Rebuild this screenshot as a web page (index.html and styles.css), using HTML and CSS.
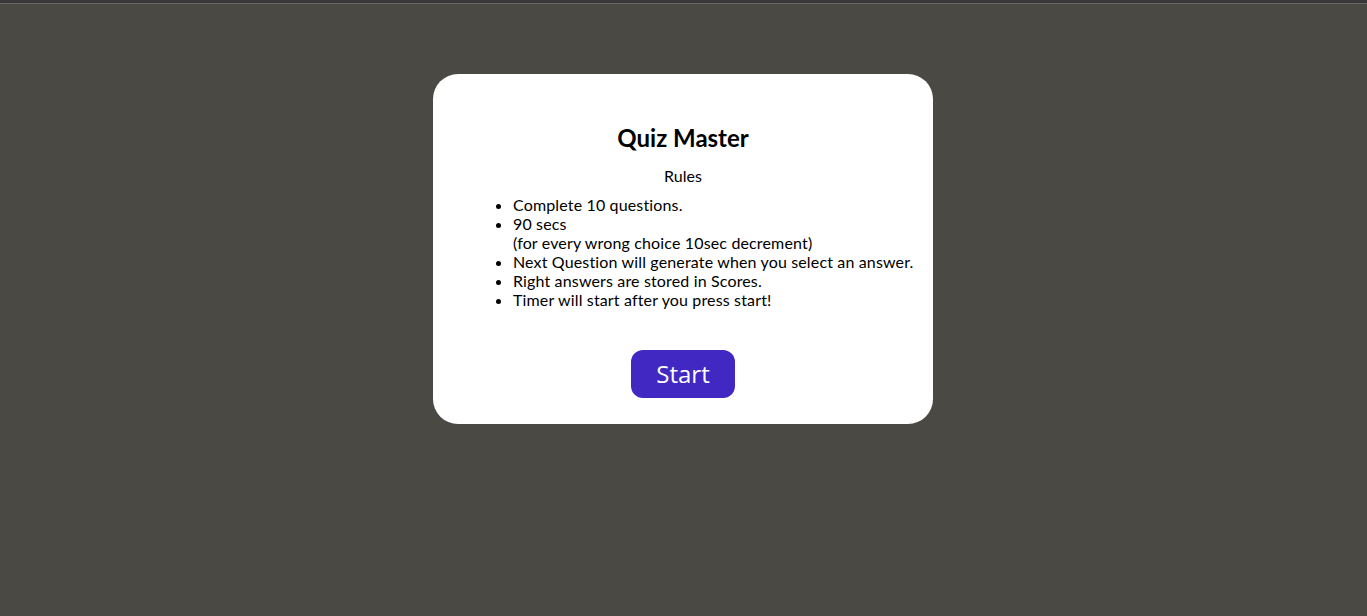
FILE: index.html
```html
<!DOCTYPE html>
<html>
<head>
<meta charset="utf-8">
<link rel="stylesheet" href="styles.css">
</head>
<body>
<div class="topbar"></div>
<main class="stage">
  <section class="card">
    <h1 class="title">Quiz Master</h1>
    <p class="rules-label">Rules</p>
    <ul class="rules">
      <li>Complete 10 questions.</li>
      <li>90 secs<br>(for every wrong choice 10sec decrement)</li>
      <li>Next Question will generate when you select an answer.</li>
      <li>Right answers are stored in Scores.</li>
      <li>Timer will start after you press start!</li>
    </ul>
    <div class="actions"><button class="start">Start</button></div>
  </section>
</main>
</body>
</html>
```
FILE: styles.css
```css
html, body {
  margin: 0;
  padding: 0;
  height: 100%;
}
body {
  background: #4a4944;
  font-family: "Lato", "DejaVu Sans", sans-serif;
  color: #000;
}
.topbar {
  height: 3px;
  background: #38383b;
  border-bottom: 1px solid #66655f;
}
.stage {
  display: flex;
  justify-content: center;
  padding-top: 70px;
  padding-right: 1px;
}
.card {
  width: 500px;
  box-sizing: border-box;
  background: #fff;
  border-radius: 25px;
  padding: 50px 10px 26px 40px;
}
.title {
  margin: 0 30px 0 0;
  font-size: 24px;
  line-height: 28px;
  font-weight: 700;
  text-align: center;
}
.rules-label {
  margin: 14px 30px 0 0;
  font-size: 16px;
  line-height: 19px;
  text-align: center;
}
.rules {
  margin: 10px 0 0;
  padding-left: 40px;
  font-size: 16px;
  line-height: 19px;
  letter-spacing: 0.15px;
  white-space: nowrap;
}
.actions {
  display: flex;
  justify-content: center;
  margin: 41px 30px 0 0;
}
.start {
  width: 104px;
  height: 48px;
  border: none;
  border-radius: 12px;
  background: #4228c3;
  color: #fff;
  font-family: "Open Sans", "Noto Sans", sans-serif;
  font-size: 24px;
  padding: 0 0 2px;
  cursor: pointer;
}
```
